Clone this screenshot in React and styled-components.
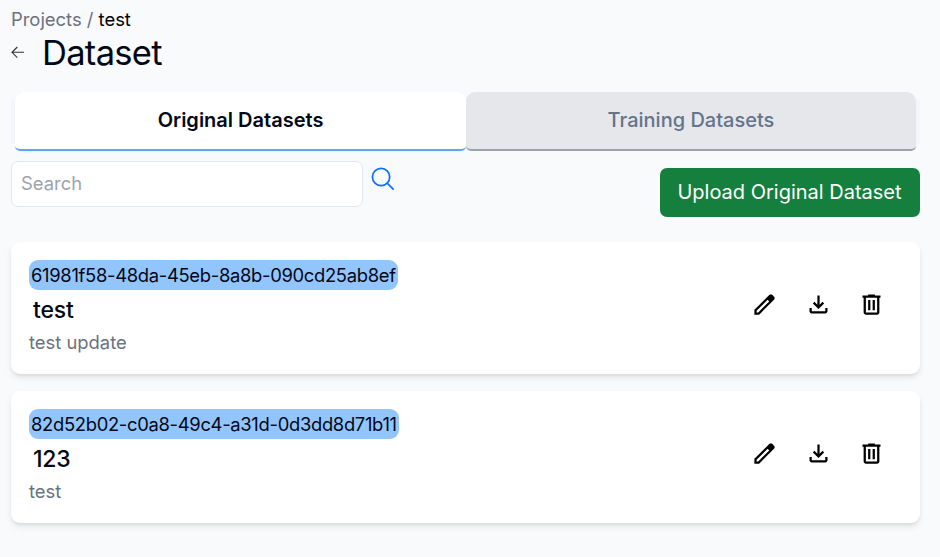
import React from "react";
import styled, { createGlobalStyle } from "styled-components";

const GlobalStyle = createGlobalStyle`
  *, *::before, *::after { box-sizing: border-box; }
  body {
    margin: 0;
    background: #f9fafc;
    color: #020817;
    font-family: Inter, "Liberation Sans", sans-serif;
    font-size: 18.4px;
    line-height: 28px;
  }
  h1, h2, p { margin: 0; }
  button, input { font: inherit; }
`;

const Page = styled.main`
  width: 940px;
  height: 557px;
  padding: 5px 20px 0 11px;
  overflow: hidden;
`;

const Breadcrumb = styled.nav`
  height: 28px;
  color: #6b7280;
  white-space: nowrap;
`;

const Current = styled.span`
  color: #000;
`;

const TitleRow = styled.header`
  display: flex;
  align-items: center;
  height: 38px;
`;

const BackButton = styled.button`
  display: flex;
  width: 14px;
  height: 14px;
  margin-right: 17px;
  padding: 0;
  border: 0;
  background: none;
  color: #333;
`;

const Title = styled.h1`
  padding-top: 1px;
  font-size: 34.5px;
  font-weight: 400;
  letter-spacing: -0.7px;
  line-height: 38px;
`;

const Tabs = styled.div`
  display: grid;
  grid-template-columns: 451px 450px;
  height: 59px;
  margin-top: 21px;
  padding: 0 4px;
  border-radius: 9px;
  background: linear-gradient(#f5f6fc, #f5f6fc) center / 100% 45px no-repeat;
`;

const Tab = styled.button`
  padding: 0 0 2px;
  border: 0;
  border-bottom: 2px solid ${(p) => (p.$active ? "#60a5fa" : "#9ca3af")};
  border-radius: 9px 9px 5px 5px;
  background: ${(p) => (p.$active ? "#fff" : "#e5e7eb")};
  color: ${(p) => (p.$active ? "#020817" : "#64748b")};
  font-size: 20px;
  font-weight: ${(p) => (p.$active ? 600 : 500)};
  box-shadow: ${(p) => (p.$active ? "0 1px 2px rgba(0, 0, 0, 0.05)" : "none")};
`;

const Toolbar = styled.div`
  display: flex;
  align-items: flex-start;
  height: 91px;
  padding-top: 10px;
`;

const SearchInput = styled.input`
  width: 352px;
  height: 46px;
  padding: 0 9px 2px;
  border: 1px solid #e2e8f0;
  border-radius: 7px;
  background: #fff;
  outline: none;
  &::placeholder { color: #9ca3af; opacity: 1; }
`;

const SearchButton = styled.button`
  display: flex;
  margin: 4px 0 0 6px;
  padding: 0;
  border: 0;
  background: none;
  color: #0d6efd;
`;

const UploadButton = styled.button`
  width: 260px;
  height: 49px;
  margin: 7px 0 0 auto;
  padding: 0 1px 2px 0;
  border: 0;
  border-radius: 7px;
  background: #15803d;
  color: #fff;
  font-size: 20px;
  white-space: nowrap;
`;

const CardList = styled.section`
  display: grid;
  gap: 17px;
`;

const Card = styled.article`
  display: flex;
  justify-content: space-between;
  height: 132px;
  padding: 18px 35px 0 18px;
  border-radius: 9px;
  background: #fff;
  box-shadow: 0 4px 7px -1px rgba(0, 0, 0, 0.1), 0 2px 4px -2px rgba(0, 0, 0, 0.1);
`;

const Details = styled.div`
  display: flex;
  flex-direction: column;
  align-items: flex-start;
`;

const Identifier = styled.span`
  height: 30px;
  padding: 0 2px;
  border-radius: 9px;
  background: #93c5fd;
  letter-spacing: -0.31px;
  line-height: 30px;
  white-space: nowrap;
`;

const Name = styled.h2`
  margin: 4px 0 0 4px;
  font-size: 23px;
  font-weight: 500;
  letter-spacing: -0.2px;
  line-height: 33px;
`;

const Description = styled.p`
  margin-top: 1px;
  color: #6b7280;
`;

const Actions = styled.div`
  display: flex;
  gap: 26.5px;
  margin-top: 31px;
  height: 27px;
`;

const IconButton = styled.button`
  display: flex;
  padding: 0;
  border: 0;
  background: none;
  color: #000;
`;

const actions = [
  {
    label: "Edit",
    path: "M5 19h1.425L16.2 9.225L14.775 7.8L5 17.575zm-2 2v-4.25L16.2 3.575q.3-.275.663-.425t.762-.15t.775.15t.65.45L20.425 5q.3.275.438.65T21 6.4q0 .4-.137.763t-.438.662L7.25 21z",
  },
  {
    label: "Download",
    path: "m12 16l-5-5l1.4-1.45l2.6 2.6V4h2v8.15l2.6-2.6L17 11zm-6 4q-.825 0-1.412-.587T4 18v-3h2v3h12v-3h2v3q0 .825-.587 1.413T18 20z",
  },
  {
    label: "Delete",
    path: "M7 21q-.825 0-1.412-.587T5 19V6H4V4h5V3h6v1h5v2h-1v13q0 .825-.587 1.413T17 21zM17 6H7v13h10zM9 17h2V8H9zm4 0h2V8h-2z",
  },
];

const datasets = [
  { id: "61981f58-48da-45eb-8a8b-090cd25ab8ef", name: "test", description: "test update" },
  { id: "82d52b02-c0a8-49c4-a31d-0d3dd8d71b11", name: "123", description: "test" },
];

function DatasetCard({ dataset }) {
  return (
    <Card>
      <Details>
        <Identifier>{dataset.id}</Identifier>
        <Name>{dataset.name}</Name>
        <Description>{dataset.description}</Description>
      </Details>
      <Actions>
        {actions.map(({ label, path }) => (
          <IconButton key={label} aria-label={label}>
            <svg width="27" height="27" viewBox="0 0 24 24" fill="currentColor">
              <path d={path} />
            </svg>
          </IconButton>
        ))}
      </Actions>
    </Card>
  );
}

export default function App() {
  return (
    <>
      <GlobalStyle />
      <Page>
        <Breadcrumb>
          Projects / <Current>test</Current>
        </Breadcrumb>
        <TitleRow>
          <BackButton aria-label="Back">
            <svg width="14" height="14" viewBox="0 0 14 14" fill="none" stroke="currentColor" strokeWidth="1.1">
              <path d="M13 7.3H1M6.3 2L1 7.3l5.3 5.3" />
            </svg>
          </BackButton>
          <Title>Dataset</Title>
        </TitleRow>
        <Tabs>
          <Tab $active>Original Datasets</Tab>
          <Tab>Training Datasets</Tab>
        </Tabs>
        <Toolbar>
          <SearchInput placeholder="Search" />
          <SearchButton aria-label="Search">
            <svg width="27.6" height="27.6" viewBox="0 0 24 24" fill="none" stroke="currentColor" strokeWidth="1.5" strokeLinecap="round">
              <path d="m21 21-5.197-5.197m0 0A7.5 7.5 0 1 0 5.196 5.196a7.5 7.5 0 0 0 10.607 10.607Z" />
            </svg>
          </SearchButton>
          <UploadButton>Upload Original Dataset</UploadButton>
        </Toolbar>
        <CardList>
          {datasets.map((dataset) => (
            <DatasetCard key={dataset.id} dataset={dataset} />
          ))}
        </CardList>
      </Page>
    </>
  );
}
